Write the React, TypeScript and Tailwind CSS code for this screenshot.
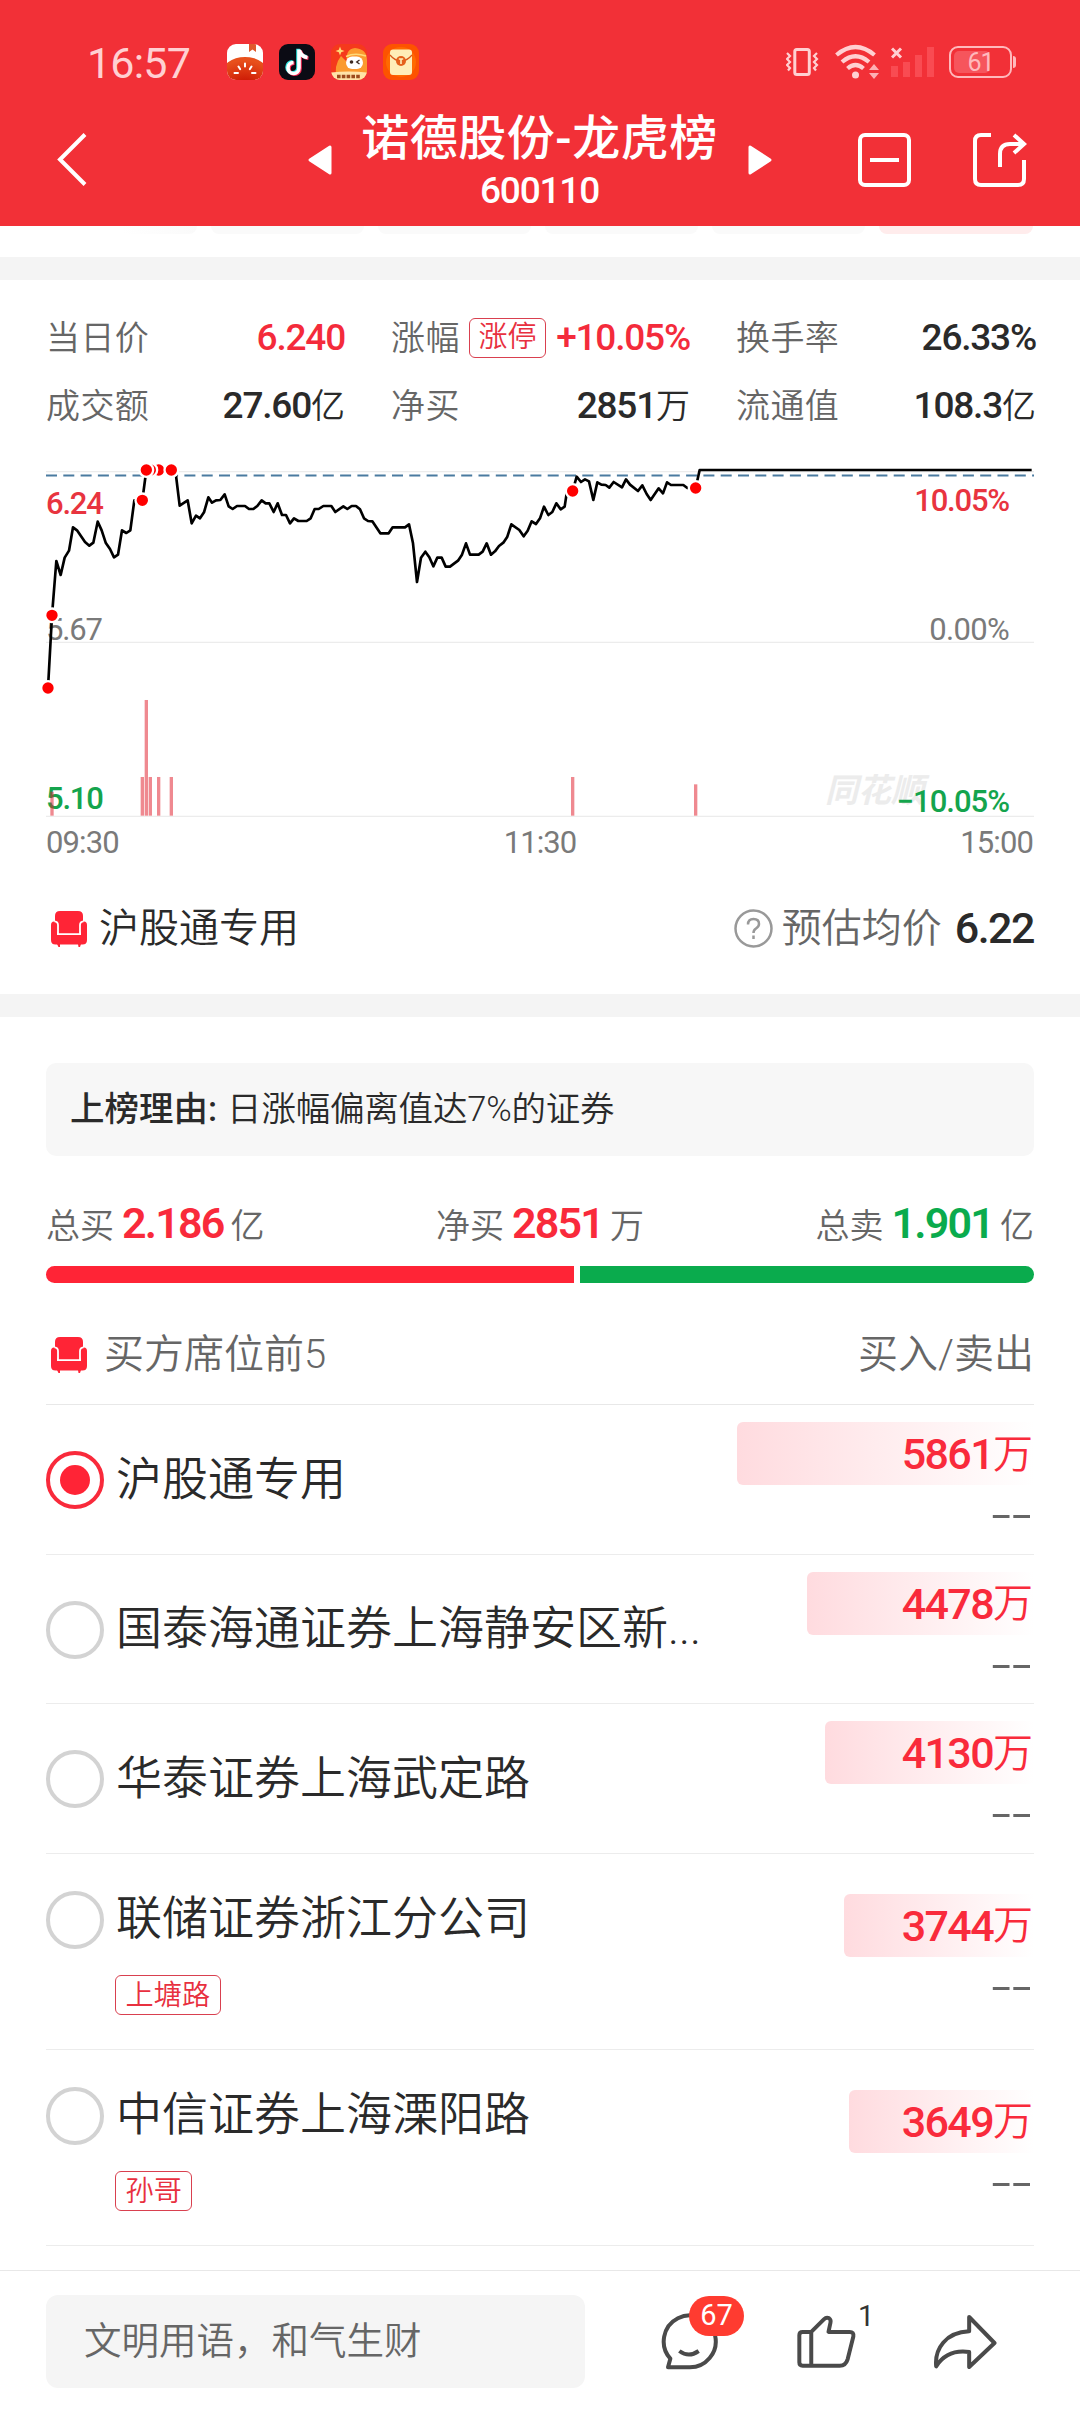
import React, { useState } from 'react';
import clsx from 'clsx';

type Seat = {
  id: number;
  name: string;
  buy: string;
  sell: string;
  barWidth: number;
  tag?: string;
};

const seats: Seat[] = [
  { id: 1, name: '沪股通专用', buy: '5861', sell: '--', barWidth: 297 },
  { id: 2, name: '国泰海通证券上海静安区新...', buy: '4478', sell: '--', barWidth: 227 },
  { id: 3, name: '华泰证券上海武定路', buy: '4130', sell: '--', barWidth: 209 },
  { id: 4, name: '联储证券浙江分公司', buy: '3744', sell: '--', barWidth: 190, tag: '上塘路' },
  { id: 5, name: '中信证券上海溧阳路', buy: '3649', sell: '--', barWidth: 185, tag: '孙哥' },
];

// intraday line, three units per pixel
const pricePoints =
  '54,714 66,496 79,333 92,375 104,323 117,302 129,232 141,241 165,276 178,287 190,278 203,215 215,241 227,278 240,297 252,322 264,314 276,241 289,249 301,241 313,151 337,151 349,60 361,60 424,60 436,60 449,167 473,151 485,220 498,197 510,205 522,187 535,142 546,158 558,151 571,150 584,133 596,169 608,177 621,168 645,168 657,177 670,177 682,168 695,151 707,160 718,160 731,186 743,160 756,195 768,195 780,220 792,205 805,213 830,213 842,205 854,177 866,177 880,168 904,168 916,186 940,169 952,177 965,168 978,168 990,178 1002,205 1014,213 1027,214 1051,250 1076,250 1088,232 1125,232 1137,223 1149,280 1161,396 1173,323 1186,305 1198,322 1210,349 1222,323 1235,323 1247,350 1260,350 1284,332 1296,314 1308,280 1320,314 1346,314 1358,305 1370,280 1383,314 1395,304 1407,288 1420,278 1432,260 1444,223 1468,240 1481,259 1493,242 1505,214 1518,222 1530,205 1542,170 1555,195 1567,186 1579,160 1592,178 1604,170 1610,130 1628,123 1640,80 1653,96 1665,88 1677,94 1690,150 1702,97 1714,104 1727,105 1738,113 1751,96 1776,112 1788,88 1800,104 1824,123 1837,106 1850,132 1862,150 1886,115 1899,130 1911,97 1923,105 1960,105 1972,114 1997,114 2009,60 3005,60';

const markers = [
  [54, 714], [66, 496], [337, 151], [386, 60], [424, 60], [361, 60], [349, 60], [1628, 123], [1997, 114],
];

const volumes = [
  [66, 1025], [337, 981], [349, 750], [361, 981], [386, 981], [424, 981], [1628, 981], [1997, 1003],
];

const SofaIcon: React.FC = () => (
  <svg className="h-9 w-9 shrink-0" viewBox="0 0 36 36" fill="#ff2436">
    <path d="M4 14V5Q4 0 9 0H27Q32 0 32 5V14L29 23H7Z" />
    <path d="M0 14Q0 10.500 3 10.500Q6 10.500 6 14V24H30V14Q30 10.500 33 10.500Q36 10.500 36 14V29Q36 33.500 31.500 33.500H4.500Q0 33.500 0 29Z" />
    <path d="M3.500 10.300Q7 10.600 7 14V23.200H29V14Q29 10.600 32.500 10.300" fill="none" stroke="#fff" strokeWidth="1.800" />
    <path d="M6 33h3v3H7.500zM27 33h3l-1 3h-1.500z" />
  </svg>
);

const StatusBar: React.FC = () => (
  <div className="flex h-9 items-center pl-[87px] pr-[64px] text-[#ffd0d2]">
    <span className="w-[140px] pt-0.5 text-[43px] leading-9 tracking-[-0.8px]">16:57</span>
    <div className="flex gap-4">
      <svg className="h-9 w-9" viewBox="0 0 36 36">
        <defs>
          <clipPath id="tile"><rect width="36" height="36" rx="9" /></clipPath>
          <radialGradient id="tomato" cx=".5" cy=".8" r=".7">
            <stop offset="0" stopColor="#c70d00" />
            <stop offset="1" stopColor="#e8501c" />
          </radialGradient>
        </defs>
        <g clipPath="url(#tile)">
          <rect width="36" height="36" fill="#fff" />
          <ellipse cx="18" cy="31" rx="24" ry="18" fill="url(#tomato)" />
          <path d="M22 0h7v8l-3.500-2.500L22 8z" fill="#e0592c" />
          <path d="M18 19.500v3M11.500 22.500l1.600 2.600M24.500 22.500l-1.600 2.600M7.500 29h3.500M25 29h3.500" stroke="#fff" strokeWidth="2" strokeLinecap="round" />
        </g>
      </svg>
      <svg className="h-9 w-9" viewBox="0 0 36 36" fill="none" strokeWidth="3.600">
        <rect width="36" height="36" rx="9" fill="#0b0b14" />
        <path d="M20 5.500V24a5.500 5.500 0 1 1-5.500-5.500M20.500 6.500q1.500 6 8 7" stroke="#29e5e0" transform="translate(-1 -.8)" />
        <path d="M20 5.500V24a5.500 5.500 0 1 1-5.500-5.500M20.500 6.500q1.500 6 8 7" stroke="#fb2a55" transform="translate(1 .8)" />
        <path d="M20 5.500V24a5.500 5.500 0 1 1-5.500-5.500M20.500 6.500q1.500 6 8 7" stroke="#fff" />
      </svg>
      <svg className="h-9 w-9" viewBox="0 0 36 36">
        <g clipPath="url(#tile)">
          <rect width="36" height="36" fill="#f5391c" />
          <path d="M6 36Q2 22 10 12L16 18Q14 5 24 4Q36 5 36 16V36Z" fill="#fb9a2f" />
          <path d="M9 2.500l1.200 3.300L13.500 7 10.200 8.200 9 11.500 7.800 8.200 4.500 7 7.800 5.800z" fill="#ffd978" />
          <path d="M15 12.500Q24 8.500 35 12" stroke="#ffd978" strokeWidth="1.500" fill="none" />
          <rect x="15" y="12.500" width="17" height="12.500" rx="6.200" fill="#fff" />
          <circle cx="20.500" cy="18" r="1.800" fill="#3d2a22" />
          <path d="M28.500 16l-2.800 2 2.800 2" stroke="#3d2a22" strokeWidth="1.300" fill="none" />
          <path d="M0 28.500Q18 26.500 36 28.500L34 36H2z" fill="#ffe3a8" />
          <path d="M6 32.500h24" stroke="#9c4a1c" strokeWidth="3.400" strokeDasharray="3.600 1.200" />
        </g>
      </svg>
      <svg className="h-9 w-9" viewBox="0 0 36 36">
        <rect width="36" height="36" rx="9" fill="#fd5300" />
        <circle cx="18" cy="18" r="15" fill="#ff6a00" />
        <rect x="7" y="5.500" width="22" height="25.500" rx="3" fill="#ffedb8" />
        <path d="M7 11Q12 17 18 17T29 11" fill="none" stroke="#d9571a" strokeWidth="1.200" />
        <circle cx="18" cy="17" r="5" fill="#e5601b" />
        <path d="M15.800 15h4.400M18 15v5" stroke="#ffedb8" strokeWidth="1.600" />
      </svg>
    </div>
    <div className="ml-auto flex items-center">
      <svg className="mr-4 h-[30px] w-[33px]" viewBox="0 0 33 30" fill="none" stroke="currentColor">
        <rect x="8.800" y="2.500" width="14.500" height="25" rx="2" strokeWidth="3" />
        <path d="M1 6l3 3-3 3 3 3-3 3 3 3-2 2.500M31 6l-3 3 3 3-3 3 3 3-3 3 2 2.500" strokeWidth="2.200" />
      </svg>
      <svg className="mr-3 h-9 w-11" viewBox="0 0 44 36" fill="none" stroke="currentColor" strokeWidth="4.200">
        <path d="M1.500 11Q20.500-5 39.500 11M7 18Q20.500 6.500 34 18M12.500 24.500Q20.500 17.500 28.500 24.500" />
        <circle cx="20.500" cy="31" r="3.500" fill="currentColor" stroke="none" />
        <path d="M34 26l5-6 5 6zM34 29l5 6 5-6z" fill="currentColor" stroke="none" opacity=".8" />
      </svg>
      <svg className="mr-[15px] h-[30px] w-[43px]" viewBox="0 0 43 30">
        <path d="M1 1.500l9 9M10 1.500l-9 9" stroke="currentColor" strokeWidth="3" />
        <path d="M0 19h7v11H0zM12 15h7v15h-7zM24 8h7v22h-7zM36 0h7v30h-7z" fill="#f94b52" />
      </svg>
      <div className="relative flex h-8 w-[63px] items-center justify-center rounded-[9px] border-2 border-[#ffb9bc] text-2xl leading-none">
        <div className="absolute left-[3px] top-[3px] h-[22px] w-9 rounded-[5px] bg-[#f6555c]" />
        <span className="relative text-[25px] tracking-[-1px] text-[#ffb9bc]">61</span>
      </div>
      <div className="ml-px h-3 w-[3px] rounded-r bg-[#ffb9bc]" />
    </div>
  </div>
);

const Header: React.FC = () => (
  <header className="h-[226px] bg-[#f23037] pt-11 text-white">
    <StatusBar />
    <div className="flex h-[146px] items-center pt-[13px] pl-[57px]">
      <svg className="h-[53px] w-[30px] shrink-0" viewBox="0 0 30 53" fill="none" stroke="#fff" strokeWidth="4">
        <path d="M28 1.500L3 26.500 28 51.500" />
      </svg>
      <svg className="ml-[221px] h-[30px] w-6 shrink-0" viewBox="0 0 24 30" fill="#fff" stroke="#fff" strokeWidth="3" strokeLinejoin="round">
        <path d="M22 2v26L2 15z" />
      </svg>
      <div className="ml-[29px] flex w-[357px] shrink-0 flex-col items-center">
        <h1 className="mt-1 whitespace-nowrap text-[48px] font-medium leading-[56px] tracking-[0.5px]">诺德股份-龙虎榜</h1>
        <span className="mt-0.5 text-[37px] font-medium leading-[44px] tracking-[-1.2px]">600110</span>
      </div>
      <svg className="ml-[30px] h-[30px] w-6 shrink-0" viewBox="0 0 24 30" fill="#fff" stroke="#fff" strokeWidth="3" strokeLinejoin="round">
        <path d="M2 2v26l20-13z" />
      </svg>
      <svg className="ml-[86px] h-[54px] w-[53px] shrink-0" viewBox="0 0 53 54" fill="none" stroke="#fff" strokeWidth="4">
        <rect x="2" y="2" width="49" height="50" rx="5" />
        <path d="M12 27h29" />
      </svg>
      <svg className="ml-[62px] h-[54px] w-[54px] shrink-0" viewBox="0 0 54 54" fill="none" stroke="#fff" strokeWidth="4">
        <path d="M18 2H8Q2 2 2 8v38q0 6 6 6h37q6 0 6-6V27" />
        <path d="M27 34V21Q27 11 37 11H50M41 2l10 9-10 9" />
      </svg>
    </div>
  </header>
);

const Label: React.FC<{ children: React.ReactNode }> = ({ children }) => (
  <span className="text-[34px] font-[350] tracking-[0.4px] text-[#666]">{children}</span>
);

const Unit: React.FC<{ children: React.ReactNode }> = ({ children }) => (
  <span className="text-[34px] font-[350] tracking-normal">{children}</span>
);

const Stats: React.FC = () => (
  <div className="grid grid-cols-[299px_299px_300px] gap-x-[46px] pl-[46px] pr-11 pt-6 text-[37px] font-medium tracking-[-1.2px] text-[#2a2a2a]">
    <div className="flex h-[68px] items-center justify-between">
      <Label>当日价</Label>
      <span className="text-[#f42b3b]">6.240</span>
    </div>
    <div className="flex h-[68px] items-center justify-between whitespace-nowrap">
      <Label>涨幅</Label>
      <span className="ml-[7px] mr-2 flex h-10 w-[77px] shrink-0 items-center justify-center rounded-md border border-[#d9404f] text-[29px] font-[350] tracking-normal text-[#e8303f]">涨停</span>
      <span className="text-[#f42b3b]">+10.05%</span>
    </div>
    <div className="flex h-[68px] items-center justify-between">
      <Label>换手率</Label>
      <span>26.33%</span>
    </div>
    <div className="flex h-[68px] items-center justify-between">
      <Label>成交额</Label>
      <span>27.60<Unit>亿</Unit></span>
    </div>
    <div className="flex h-[68px] items-center justify-between">
      <Label>净买</Label>
      <span>2851<Unit>万</Unit></span>
    </div>
    <div className="flex h-[68px] items-center justify-between">
      <Label>流通值</Label>
      <span>108.3<Unit>亿</Unit></span>
    </div>
  </div>
);

const Chart: React.FC = () => (
  <svg className="mt-[10px] block h-[420px] w-[1080px]" viewBox="0 0 1080 420">
    <path d="M46 21.700H1034M46 192.300H1034M46 366.300H1034" stroke="#ececec" strokeWidth="1.200" />
    <path d="M46 25.500H1034" stroke="#4a7ba0" strokeWidth="2" strokeDasharray="11 6.300" />
    <text x="825" y="352" fontSize="33" fontWeight="700" fontStyle="italic" fill="#ececec">同花顺</text>
    <g fontSize="31" fontWeight="500" letterSpacing="-1.200">
      <text x="46" y="64" fill="#e8343f">6.24</text>
      <text x="46" y="190" fill="#7a7a7a" fontWeight="400">5.67</text>
      <text x="46" y="359" fill="#14a44d">5.10</text>
      <text x="1009" y="61" fill="#e8343f" textAnchor="end">10.05%</text>
      <text x="1009" y="190" fill="#7a7a7a" fontWeight="400" letterSpacing="-.700" textAnchor="end">0.00%</text>
      <text x="1009" y="362" fill="#14a44d" letterSpacing="-1" textAnchor="end">−10.05%</text>
      <g fill="#7a7a7a" fontWeight="400" letterSpacing="-.900">
        <text x="46" y="403">09:30</text>
        <text x="540" y="403" textAnchor="middle">11:30</text>
        <text x="1033" y="403" textAnchor="end">15:00</text>
      </g>
    </g>
    <g transform="translate(30 0) scale(.33333)">
      {volumes.map(([x, top]) => (
        <rect key={x} x={x - 5} y={top} width="10" height={1097 - top} fill="#e01c2b" opacity=".52" />
      ))}
      <polyline points={pricePoints} fill="none" stroke="#000" strokeWidth="8" strokeLinejoin="round" />
      {markers.map(([x, y]) => (
        <circle key={x} cx={x} cy={y} r="20.500" fill="#f00" stroke="#fff" strokeWidth="7" />
      ))}
    </g>
  </svg>
);

const SeatRow: React.FC<{ seat: Seat; selected: boolean; onSelect: () => void }> = ({ seat, selected, onSelect }) => (
  <div
    className={clsx('flex justify-between border-b border-[#ececec]', seat.tag ? 'h-[196px]' : 'h-[149.6px]')}
    onClick={onSelect}
  >
    <div className={seat.tag ? 'pt-[37px]' : 'pt-[46px]'}>
      <div className="flex h-[58px] items-center">
        <span
          className={clsx(
            'flex h-[58px] w-[58px] items-center justify-center rounded-full border-4',
            selected ? 'border-[#f92a3b]' : 'border-[#d3d3d3]'
          )}
        >
          {selected && <span className="h-[30px] w-[30px] rounded-full bg-[#ff2436]" />}
        </span>
        <span className="ml-3 -mt-0.5 whitespace-nowrap text-[46px] font-[350] text-[#2a2a2a]">{seat.name}</span>
      </div>
      {seat.tag && (
        <span className="ml-[69px] mt-[26px] flex h-10 w-fit items-center rounded-md border border-[#d9404f] px-[9.5px] pt-[3px] text-[28.200px] font-[350] text-[#e8303f]">
          {seat.tag}
        </span>
      )}
    </div>
    <div className={clsx('flex flex-col items-end', seat.tag ? 'pt-10' : 'pt-[17px]')}>
      <div
        className="flex h-[63px] items-center justify-end rounded-l-md bg-gradient-to-r from-[#ffdbdf] to-white pt-0.5 pr-px text-[#f92a3b]"
        style={{ width: seat.barWidth }}
      >
        <span className="text-[43px] font-medium tracking-[-1.6px]">{seat.buy}</span>
        <span className="text-[40px] font-[350]">万</span>
      </div>
      <span className="mt-[9px] mr-0.5 inline-block origin-right scale-x-[1.75] text-[40px] leading-[44px] tracking-[0.6px] text-[#666]">{seat.sell}</span>
    </div>
  </div>
);

const Total: React.FC<{ label: string; value: string; unit: string; green?: boolean }> = ({ label, value, unit, green }) => (
  <div className="flex items-baseline text-[34px] font-[350] text-[#666]">
    <span>{label}</span>
    <span className={clsx('ml-2 mr-[7px] text-[43px] font-semibold leading-[50px] tracking-[-1.8px]', green ? 'text-[#0aab4d]' : 'text-[#f92a3b]')}>
      {value}
    </span>
    <span>{unit}</span>
  </div>
);

const Footer: React.FC = () => (
  <footer className="flex h-[142px] items-center border-t border-[#e8e8e8] bg-white pl-[46px]">
    <div className="flex h-[93px] w-[539px] items-center rounded-xl bg-[#f5f5f5] pl-[38px] text-[37.500px] font-[350] text-[#666]">
      文明用语，和气生财
    </div>
    <div className="relative ml-[75px]">
      <svg className="h-[59px] w-[59px]" viewBox="120 757 177 177" fill="none" stroke="#4a4a4a" strokeWidth="12" strokeLinejoin="round">
        <path d="M206 923H144L151 897A78 78 0 1 1 206 923Z" />
        <path d="M178 874Q206 895 236 874" />
      </svg>
      <span className="absolute -top-4 left-[29px] flex h-10 w-[55px] items-center justify-center rounded-full bg-[#ff3b30] text-[29px] text-white">67</span>
    </div>
    <div className="relative ml-[77px]">
      <svg className="h-[55px] w-[61px]" viewBox="528 762 184 166" fill="none" stroke="#4a4a4a" strokeWidth="12" strokeLinejoin="round">
        <path d="M538 826Q538 816 548 816H574L612 778Q620 770 628 775Q634 779 632 788L626 816H690Q703 816 701 830L684 898Q678 918 660 918H548Q538 918 538 908ZM574 816V918" />
      </svg>
      <span className="absolute -top-[15px] left-[62px] text-[29px] leading-[34px] text-[#333]">1</span>
    </div>
    <svg className="ml-[76px] h-[56px] w-[65px]" viewBox="938 760 194 168" fill="none" stroke="#4a4a4a" strokeWidth="12" strokeLinejoin="round">
      <path d="M1046 769L1122 847L1046 919V874C1002 868 968 884 947 917C942 865 975 815 1046 812Z" />
    </svg>
  </footer>
);

const App: React.FC = () => {
  const [selectedSeat, setSelectedSeat] = useState(1);

  return (
    <div className="flex h-[2412px] w-[1080px] flex-col overflow-hidden bg-white font-['Roboto','Noto_Sans_CJK_SC',sans-serif]">
      <Header />

      <div className="flex h-[31px] gap-[14px] pl-[46px]">
        <div className="h-2 w-[151px] rounded-b-xl bg-gradient-to-r from-white from-50% to-[#fafafa]" />
        <div className="h-2 w-[153px] rounded-b-xl bg-[#fafafa]" />
        <div className="h-2 w-[153px] rounded-b-xl bg-[#fafafa]" />
        <div className="h-2 w-[153px] rounded-b-xl bg-[#fafafa]" />
        <div className="h-2 w-[153px] rounded-b-xl bg-[#fafafa]" />
        <div className="h-2 w-[154px] rounded-b-xl bg-[#ffecec]" />
      </div>
      <div className="h-[23px] bg-[#f4f4f4]" />

      <Stats />
      <Chart />

      <div className="flex h-[124px] items-center justify-between pb-[7px] pl-[51px] pr-[46px] text-[40px] font-[350] text-[#2a2a2a]">
        <div className="flex items-center gap-3">
          <SofaIcon />
          <span>沪股通专用</span>
        </div>
        <div className="flex items-center">
          <svg className="mr-[9px] h-[39px] w-[39px]" viewBox="0 0 39 39" fill="none" stroke="#999" strokeWidth="2.500">
            <circle cx="19.500" cy="19.500" r="18" />
            <path d="M14 15.500q0-5.500 5.500-5.500t5.500 5q0 2.500-3 4.500-2.500 1.600-2.500 4.500M19.500 26.500v3.500" />
          </svg>
          <span className="text-[#666]">预估均价</span>
          <span className="ml-[13px] text-[43px] font-medium tracking-[-1.5px]">6.22</span>
        </div>
      </div>
      <div className="h-[23px] bg-[#f4f4f4]" />

      <div className="px-[46px] pt-[46px]">
        <div className="flex h-[93px] items-center rounded-[10px] bg-[#f7f7f7] pl-6 text-[34.500px] text-[#2a2a2a]">
          <span className="mr-2.5 font-medium">上榜理由:</span>
          <span className="font-[350] tracking-[-0.2px]">日涨幅偏离值达7%的证券</span>
        </div>

        <div className="mt-11 flex h-[50px] items-center justify-between">
          <Total label="总买" value="2.186" unit="亿" />
          <Total label="净买" value="2851" unit="万" />
          <Total label="总卖" value="1.901" unit="亿" green />
        </div>
        <div className="mt-4 flex h-[17px] gap-1.5">
          <div className="w-[528px] rounded-l-full bg-[#ff2436]" />
          <div className="flex-1 rounded-r-full bg-[#0aab4d]" />
        </div>

        <div className="mt-[22px] flex h-[100px] items-center justify-between border-b border-[#e8e8e8] pl-[5px] text-[40px] font-[350] text-[#666]">
          <div className="flex items-center gap-[17px]">
            <SofaIcon />
            <span>买方席位前5</span>
          </div>
          <span>买入/卖出</span>
        </div>
        {seats.map(seat => (
          <SeatRow
            key={seat.id}
            seat={seat}
            selected={seat.id === selectedSeat}
            onSelect={() => setSelectedSeat(seat.id)}
          />
        ))}
      </div>

      <div className="mt-auto">
        <Footer />
      </div>
    </div>
  );
};

export default App;
